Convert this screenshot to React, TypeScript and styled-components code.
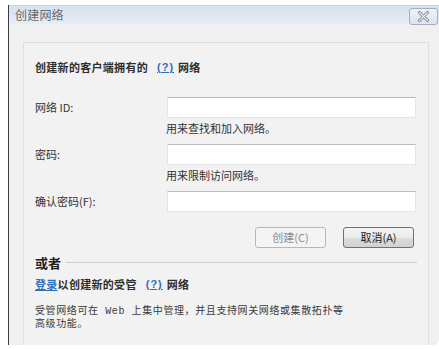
import React from 'react';
import styled, { createGlobalStyle } from 'styled-components';

const GlobalStyle = createGlobalStyle`
	html, body {
		margin: 0;
		padding: 0;
		background: #ffffff;
	}
	body {
		font-family: "Noto Sans CJK SC", "Liberation Sans", sans-serif;
	}
`;

const Page = styled.div`
	width: 439px;
	height: 349px;
	overflow: hidden;
`;

const Window = styled.div`
	margin: 5px 0 0 8px;
	width: 430px;
	height: 340px;
	border-left: 1px solid #3c3c3c;
	border-radius: 0 0 6px 0;
	background: #f0f0f0;
	display: flex;
	flex-direction: column;
`;

const TitleBar = styled.div`
	height: 18px;
	display: flex;
	align-items: center;
	justify-content: space-between;
	padding: 0 1px 0 6px;
	background: linear-gradient(#d5e1ee, #e6edf5);
	border-top: 1px solid #c9d6e4;
`;

const Title = styled.span`
	font-size: 12px;
	line-height: 16px;
	color: #6a6a6a;
	letter-spacing: 0.2px;
`;

const CloseButton = styled.div`
	width: 27px;
	height: 15px;
	border: 1px solid #a3afbe;
	border-radius: 3px;
	background: linear-gradient(#eef2f7, #dde4ec);
	display: flex;
	align-items: center;
	justify-content: center;
	margin-top: 2px;
`;

const Body = styled.div`
	flex: 1;
	padding: 18px 10px 0 14px;
	display: flex;
`;

const Panel = styled.div`
	flex: 1;
	border: 1px solid #dfdfdf;
	border-bottom: none;
	background: #f2f2f2;
	padding: 18px 11px 0 11px;
	display: flex;
	flex-direction: column;
`;

const Heading = styled.div`
	font-size: 11px;
	line-height: 12px;
	font-weight: bold;
	color: #2e2e2e;
	letter-spacing: 0.3px;
	display: flex;
	align-items: center;
`;

const HelpLink = styled.a`
	color: #2f6fba;
	text-decoration: underline;
	font-family: "Liberation Sans", sans-serif;
	font-size: 11px;
	margin: 0 4px 0 9px;
	letter-spacing: 1px;
	cursor: pointer;
`;

const Form = styled.div`
	margin-top: 24px;
	display: flex;
	flex-direction: column;
`;

const FieldRow = styled.div`
	display: grid;
	grid-template-columns: 132px 249px;
`;

const Label = styled.div`
	font-size: 11px;
	line-height: 21px;
	color: #333333;
`;

const Input = styled.div`
	box-sizing: border-box;
	height: 21px;
	background: #ffffff;
	border: 1px solid #e2e6ea;
	border-top-color: #b9bcc1;
`;

const Hint = styled.div<{ $last?: boolean }>`
	grid-column: 2;
	font-size: 11px;
	line-height: 14px;
	color: #333333;
	margin: 3px 0 ${({ $last }) => ($last ? 0 : 9)}px -1px;
`;

const ButtonRow = styled.div`
	display: flex;
	justify-content: flex-end;
	gap: 17px;
	margin: 15px 3px 0 0;
`;

const Button = styled.div<{ $disabled?: boolean }>`
	box-sizing: border-box;
	width: 71px;
	height: 21px;
	border-radius: 3px;
	border: 1px solid ${({ $disabled }) => ($disabled ? '#b4b8bb' : '#707070')};
	background: ${({ $disabled }) =>
		$disabled ? '#f4f4f4' : 'linear-gradient(#f4f4f4 0%, #ebebeb 50%, #dcdcdc 51%, #d2d2d2 100%)'};
	color: ${({ $disabled }) => ($disabled ? '#8d8d8d' : '#1e1e1e')};
	font-size: 11px;
	line-height: 19px;
	text-align: center;
`;

const Divider = styled.div`
	margin-top: 7px;
	display: flex;
	align-items: center;
	gap: 5px;
`;

const DividerLabel = styled.span`
	font-size: 13px;
	line-height: 16px;
	font-weight: bold;
	color: #222222;
`;

const DividerLine = styled.div`
	flex: 1;
	height: 1px;
	background: #cfcfcf;
	margin-top: -2px;
`;

const ManagedHeading = styled(Heading)`
	margin-top: 6px;
	line-height: 14px;
`;

const SignIn = styled.a`
	color: #2f6fba;
	text-decoration: underline;
	cursor: pointer;
`;

const Paragraph = styled.p`
	margin: 15px 0 0 0;
	width: 312px;
	font-family: "Liberation Mono", "Noto Sans CJK SC", monospace;
	font-size: 10px;
	line-height: 12.5px;
	letter-spacing: 0.6px;
	color: #3a3a3a;
`;

const CloseIcon = () => (
	<svg width="13" height="11" viewBox="0 0 13 11">
		<path d="M2.5 1.5 L10.5 9.5 M10.5 1.5 L2.5 9.5" stroke="#7c848d" strokeWidth="3" strokeLinecap="round" />
		<path d="M2.5 1.5 L10.5 9.5 M10.5 1.5 L2.5 9.5" stroke="#eef1f5" strokeWidth="1.1" strokeLinecap="round" />
	</svg>
);

export default function App() {
	return (
		<Page>
			<GlobalStyle />
			<Window>
				<TitleBar>
					<Title>创建网络</Title>
					<CloseButton>
						<CloseIcon />
					</CloseButton>
				</TitleBar>
				<Body>
					<Panel>
						<Heading>
							创建新的客户端拥有的<HelpLink>(?)</HelpLink>网络
						</Heading>
						<Form>
							<FieldRow>
								<Label>网络 ID:</Label>
								<Input />
								<Hint>用来查找和加入网络。</Hint>
							</FieldRow>
							<FieldRow>
								<Label>密码:</Label>
								<Input />
								<Hint>用来限制访问网络。</Hint>
							</FieldRow>
							<FieldRow>
								<Label>确认密码(F):</Label>
								<Input />
							</FieldRow>
						</Form>
						<ButtonRow>
							<Button $disabled>创建(C)</Button>
							<Button>取消(A)</Button>
						</ButtonRow>
						<Divider>
							<DividerLabel>或者</DividerLabel>
							<DividerLine />
						</Divider>
						<ManagedHeading>
							<SignIn>登录</SignIn>以创建新的受管<HelpLink>(?)</HelpLink>网络
						</ManagedHeading>
						<Paragraph>
							受管网络可在 Web 上集中管理，并且支持网关网络或集散拓扑等高级功能。
						</Paragraph>
					</Panel>
				</Body>
			</Window>
		</Page>
	);
}
